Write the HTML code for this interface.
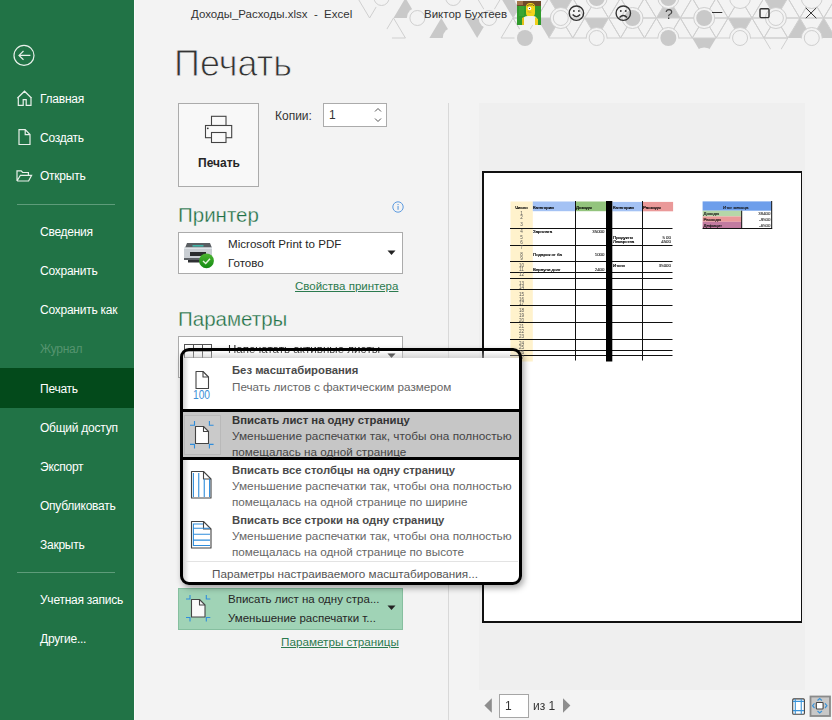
<!DOCTYPE html>
<html><head><meta charset="utf-8">
<style>
*{margin:0;padding:0;box-sizing:border-box}
html,body{width:832px;height:720px;overflow:hidden;background:#f3f3f3;font-family:"Liberation Sans",sans-serif}
.a{position:absolute;white-space:nowrap;line-height:1}
#side{position:absolute;left:0;top:0;width:134px;height:720px;background:#217346}
#side .t{position:absolute;left:40px;color:#fff;font-size:12px;letter-spacing:-0.25px;line-height:1;white-space:nowrap}
.sep{position:absolute;left:17px;width:98px;height:1px;background:#5e9c7a}
</style></head><body>
<div style="position:absolute;left:134px;top:0;width:1px;height:720px;background:#fafafa"></div>
<div id="side">
  <div id="sel" style="position:absolute;left:0;top:368px;width:134px;height:40px;background:#034a1b"></div>
  
<svg style="position:absolute;left:0;top:0" width="134" height="200">
  <g fill="none" stroke="#e8f0ea" stroke-width="1.2">
    <circle cx="24" cy="55.4" r="10"/>
    <path d="M19 55.4H30.4M23.5 51L19 55.4L23.5 59.8"/>
    <path d="M17.3 98.3L24.5 91.2L31.7 98.3M18.3 97.5V105.3H23.2V99.6H26.2V105.3H31V97.5"/>
    <path d="M19 129.7H25.2L30 134.6V144.5H19Z M25.2 129.7V134.6H30"/>
    <path d="M17 181V170.8H21.2L22.6 172.5H28.4V175.2 M17 181H28.6L31.6 175.3H20.4L17 181"/>
  </g>
</svg>
  <div class="sep" style="top:204px"></div>
  <div class="sep" style="top:572px"></div>
  <div class="t" style="top:92.8px">Главная</div>
  <div class="t" style="top:131.8px">Создать</div>
  <div class="t" style="top:170.4px">Открыть</div>
  <div class="t" style="top:225.5px">Сведения</div>
  <div class="t" style="top:264.8px">Сохранить</div>
  <div class="t" style="top:304px">Сохранить как</div>
  <div class="t" style="top:343.2px;color:#55946f">Журнал</div>
  <div class="t" style="top:382.6px">Печать</div>
  <div class="t" style="top:421.8px">Общий доступ</div>
  <div class="t" style="top:461px">Экспорт</div>
  <div class="t" style="top:500.2px">Опубликовать</div>
  <div class="t" style="top:539px">Закрыть</div>
  <div class="t" style="top:594px">Учетная запись</div>
  <div class="t" style="top:633px">Другие...</div>
</div>

<!-- pattern -->
<svg style="position:absolute;left:0;top:0" width="832" height="60">
<defs><mask id="pm" maskUnits="userSpaceOnUse" x="0" y="0" width="832" height="60"><rect width="832" height="60" fill="#fff"/>
<circle cx="381.55" cy="-2.00" r="10.5" fill="#000"/>
<circle cx="453.25" cy="-2.00" r="10.5" fill="#000"/>
<circle cx="524.95" cy="-2.00" r="10.5" fill="#000"/>
<circle cx="596.65" cy="-2.00" r="10.5" fill="#000"/>
<circle cx="668.35" cy="-2.00" r="10.5" fill="#000"/>
<circle cx="740.05" cy="-2.00" r="10.5" fill="#000"/>
<circle cx="811.75" cy="-2.00" r="10.5" fill="#000"/>
<circle cx="345.70" cy="18.00" r="10.5" fill="#000"/>
<circle cx="417.40" cy="18.00" r="10.5" fill="#000"/>
<circle cx="489.10" cy="18.00" r="10.5" fill="#000"/>
<circle cx="560.80" cy="18.00" r="10.5" fill="#000"/>
<circle cx="632.50" cy="18.00" r="10.5" fill="#000"/>
<circle cx="704.20" cy="18.00" r="10.5" fill="#000"/>
<circle cx="775.90" cy="18.00" r="10.5" fill="#000"/>
<circle cx="847.60" cy="18.00" r="10.5" fill="#000"/>
<circle cx="381.55" cy="38.00" r="10.5" fill="#000"/>
<circle cx="453.25" cy="38.00" r="10.5" fill="#000"/>
<circle cx="524.95" cy="38.00" r="10.5" fill="#000"/>
<circle cx="596.65" cy="38.00" r="10.5" fill="#000"/>
<circle cx="668.35" cy="38.00" r="10.5" fill="#000"/>
<circle cx="740.05" cy="38.00" r="10.5" fill="#000"/>
<circle cx="811.75" cy="38.00" r="10.5" fill="#000"/>
<circle cx="345.70" cy="58.00" r="10.5" fill="#000"/>
<circle cx="417.40" cy="58.00" r="10.5" fill="#000"/>
<circle cx="489.10" cy="58.00" r="10.5" fill="#000"/>
<circle cx="560.80" cy="58.00" r="10.5" fill="#000"/>
<circle cx="632.50" cy="58.00" r="10.5" fill="#000"/>
<circle cx="704.20" cy="58.00" r="10.5" fill="#000"/>
<circle cx="775.90" cy="58.00" r="10.5" fill="#000"/>
<circle cx="847.60" cy="58.00" r="10.5" fill="#000"/>
</mask><clipPath id="pc"><rect x="0" y="0" width="832" height="38.5"/></clipPath></defs>
<g mask="url(#pm)">
<polygon points="405.45,-2.00 393.50,18.00 417.40,18.00" fill="#c9c9c9"/>
<polygon points="441.30,18.00 429.35,38.00 453.25,38.00" fill="#c9c9c9"/>
<polygon points="465.20,18.00 489.10,18.00 477.15,38.00" fill="#c9c9c9"/>
<polygon points="501.05,-2.00 524.95,-2.00 513.00,18.00" fill="#c9c9c9"/>
<polygon points="536.90,18.00 560.80,18.00 548.85,38.00" fill="#c9c9c9"/>
<polygon points="548.85,-2.00 572.75,-2.00 560.80,18.00" fill="#c9c9c9"/>
<polygon points="584.70,18.00 608.60,18.00 596.65,38.00" fill="#c9c9c9"/>
<polygon points="668.35,-2.00 656.40,18.00 680.30,18.00" fill="#c9c9c9"/>
<polygon points="692.25,38.00 716.15,38.00 704.20,58.00" fill="#c9c9c9"/>
<polygon points="728.10,18.00 752.00,18.00 740.05,38.00" fill="#c9c9c9"/>
<polygon points="763.95,-2.00 787.85,-2.00 775.90,18.00" fill="#c9c9c9"/>
<polygon points="799.80,18.00 787.85,38.00 811.75,38.00" fill="#c9c9c9"/>
<polygon points="823.70,18.00 811.75,38.00 835.65,38.00" fill="#c9c9c9"/>
<g fill="none" stroke="#cfcfcf" stroke-width="1">
<polygon points="357.65,-2.00 381.55,-2.00 369.60,18.00"/>
<polygon points="393.50,18.00 381.55,38.00 405.45,38.00"/>
<polygon points="477.15,-2.00 501.05,-2.00 489.10,18.00"/>
<polygon points="513.00,18.00 501.05,38.00 524.95,38.00"/>
<polygon points="524.95,-2.00 548.85,-2.00 536.90,18.00"/>
<polygon points="524.95,-2.00 513.00,18.00 536.90,18.00"/>
<polygon points="513.00,18.00 536.90,18.00 524.95,38.00"/>
<polygon points="763.95,38.00 787.85,38.00 775.90,58.00"/>
<polygon points="548.85,-2.00 536.90,18.00 560.80,18.00"/>
<polygon points="572.75,-2.00 596.65,-2.00 584.70,18.00"/>
<polygon points="572.75,-2.00 560.80,18.00 584.70,18.00"/>
<polygon points="596.65,-2.00 620.55,-2.00 608.60,18.00"/>
<polygon points="596.65,-2.00 584.70,18.00 608.60,18.00"/>
<polygon points="620.55,-2.00 644.45,-2.00 632.50,18.00"/>
<polygon points="620.55,-2.00 608.60,18.00 632.50,18.00"/>
<polygon points="644.45,-2.00 668.35,-2.00 656.40,18.00"/>
<polygon points="644.45,-2.00 632.50,18.00 656.40,18.00"/>
<polygon points="668.35,-2.00 692.25,-2.00 680.30,18.00"/>
<polygon points="692.25,-2.00 716.15,-2.00 704.20,18.00"/>
<polygon points="692.25,-2.00 680.30,18.00 704.20,18.00"/>
<polygon points="716.15,-2.00 740.05,-2.00 728.10,18.00"/>
<polygon points="716.15,-2.00 704.20,18.00 728.10,18.00"/>
<polygon points="740.05,-2.00 763.95,-2.00 752.00,18.00"/>
<polygon points="740.05,-2.00 728.10,18.00 752.00,18.00"/>
<polygon points="763.95,-2.00 752.00,18.00 775.90,18.00"/>
<polygon points="787.85,-2.00 811.75,-2.00 799.80,18.00"/>
<polygon points="787.85,-2.00 775.90,18.00 799.80,18.00"/>
<polygon points="811.75,-2.00 835.65,-2.00 823.70,18.00"/>
<polygon points="811.75,-2.00 799.80,18.00 823.70,18.00"/>
<polygon points="835.65,-2.00 859.55,-2.00 847.60,18.00"/>
<polygon points="835.65,-2.00 823.70,18.00 847.60,18.00"/>
<polygon points="560.80,18.00 584.70,18.00 572.75,38.00"/>
<polygon points="560.80,18.00 548.85,38.00 572.75,38.00"/>
<polygon points="584.70,18.00 572.75,38.00 596.65,38.00"/>
<polygon points="608.60,18.00 632.50,18.00 620.55,38.00"/>
<polygon points="608.60,18.00 596.65,38.00 620.55,38.00"/>
<polygon points="632.50,18.00 656.40,18.00 644.45,38.00"/>
<polygon points="632.50,18.00 620.55,38.00 644.45,38.00"/>
<polygon points="656.40,18.00 680.30,18.00 668.35,38.00"/>
<polygon points="656.40,18.00 644.45,38.00 668.35,38.00"/>
<polygon points="680.30,18.00 704.20,18.00 692.25,38.00"/>
<polygon points="680.30,18.00 668.35,38.00 692.25,38.00"/>
<polygon points="704.20,18.00 728.10,18.00 716.15,38.00"/>
<polygon points="704.20,18.00 692.25,38.00 716.15,38.00"/>
<polygon points="728.10,18.00 716.15,38.00 740.05,38.00"/>
<polygon points="752.00,18.00 775.90,18.00 763.95,38.00"/>
<polygon points="752.00,18.00 740.05,38.00 763.95,38.00"/>
<polygon points="775.90,18.00 799.80,18.00 787.85,38.00"/>
<polygon points="775.90,18.00 763.95,38.00 787.85,38.00"/>
<polygon points="799.80,18.00 823.70,18.00 811.75,38.00"/>
<polygon points="823.70,18.00 847.60,18.00 835.65,38.00"/>
<polygon points="847.60,18.00 871.50,18.00 859.55,38.00"/>
<polygon points="847.60,18.00 835.65,38.00 859.55,38.00"/>
</g></g>
<g fill="none" stroke="#cfcfcf" stroke-width="1">
<circle cx="381.55" cy="-2.00" r="7.5"/>
<circle cx="453.25" cy="-2.00" r="7.5"/>
<circle cx="596.65" cy="-2.00" r="10.5" clip-path="url(#pc)"/>
<circle cx="596.65" cy="-2.00" r="8" fill="#c9c9c9" stroke="none"/>
<circle cx="668.35" cy="-2.00" r="10.5" clip-path="url(#pc)"/>
<circle cx="668.35" cy="-2.00" r="8" fill="#c9c9c9" stroke="none"/>
<circle cx="740.05" cy="-2.00" r="10.5" clip-path="url(#pc)"/>
<circle cx="811.75" cy="-2.00" r="10.5" clip-path="url(#pc)"/>
<circle cx="417.40" cy="18.00" r="7.5"/>
<circle cx="489.10" cy="18.00" r="7.5"/>
<circle cx="560.80" cy="18.00" r="10.5" clip-path="url(#pc)"/>
<circle cx="560.80" cy="18.00" r="7.5"/>
<circle cx="632.50" cy="18.00" r="10.5" clip-path="url(#pc)"/>
<circle cx="632.50" cy="18.00" r="8" fill="#c9c9c9" stroke="none"/>
<circle cx="704.20" cy="18.00" r="10.5" clip-path="url(#pc)"/>
<circle cx="704.20" cy="18.00" r="8" fill="#c9c9c9" stroke="none"/>
<circle cx="775.90" cy="18.00" r="10.5" clip-path="url(#pc)"/>
<circle cx="775.90" cy="18.00" r="7.5"/>
<circle cx="847.60" cy="18.00" r="10.5" clip-path="url(#pc)"/>
<circle cx="847.60" cy="18.00" r="7.5"/>
<circle cx="524.95" cy="38.00" r="8" fill="#c9c9c9" stroke="none"/>
<circle cx="596.65" cy="38.00" r="10.5" clip-path="url(#pc)"/>
<circle cx="596.65" cy="38.00" r="7.5"/>
<circle cx="668.35" cy="38.00" r="10.5" clip-path="url(#pc)"/>
<circle cx="668.35" cy="38.00" r="8" fill="#c9c9c9" stroke="none"/>
<circle cx="740.05" cy="38.00" r="10.5" clip-path="url(#pc)"/>
<circle cx="740.05" cy="38.00" r="7.5"/>
<circle cx="811.75" cy="38.00" r="10.5" clip-path="url(#pc)"/>
<circle cx="811.75" cy="38.00" r="7.5"/>
</g>
</svg>
<!-- /pattern -->
<!-- title -->
<div class="a" style="left:191px;top:9px;font-size:11.5px;color:#333">Доходы_Расходы.xlsx&nbsp; - &nbsp;Excel</div>
<div class="a" style="left:424px;top:8.5px;font-size:11.5px;color:#333">Виктор Бухтеев</div>

<!-- heading -->
<div class="a" style="left:174px;top:46px;font-size:36px;color:#333;-webkit-text-stroke:0.9px #f3f3f3">Печать</div>

<!-- print button -->
<div style="position:absolute;left:178px;top:103px;width:81px;height:84px;border:1px solid #ababab;background:#f8f8f8"></div>
<div class="a" style="left:198px;top:157px;font-size:12px;font-weight:bold;color:#262626">Печать</div>
<div class="a" style="left:275px;top:110px;font-size:12px;color:#333">Копии:</div>
<div style="position:absolute;left:323px;top:103px;width:64px;height:23.5px;border:1px solid #ababab;background:#fff"></div>
<div class="a" style="left:329px;top:109px;font-size:12px;color:#333">1</div>

<svg style="position:absolute;left:370px;top:104px" width="16" height="22"><path d="M5 7.5L8 4.5L11 7.5 M5 14.5L8 17.5L11 14.5" stroke="#555" stroke-width="1" fill="none"/></svg>
<!-- printer -->
<div class="a" style="left:178px;top:205px;font-size:20.5px;color:#1f7045;-webkit-text-stroke:0.3px #f3f3f3">Принтер</div>
<div style="position:absolute;left:178px;top:232px;width:225px;height:42px;border:1px solid #ababab;background:#fff"></div>
<div class="a" style="left:228px;top:237.5px;font-size:11.6px;color:#262626">Microsoft Print to PDF</div>
<div class="a" style="left:228px;top:257px;font-size:11.6px;color:#262626">Готово</div>
<div class="a" style="left:295px;top:280.5px;font-size:11.5px;color:#2b7a4f;text-decoration:underline">Свойства принтера</div>

<div class="a" style="left:178px;top:309px;font-size:20.5px;color:#1f7045;-webkit-text-stroke:0.3px #f3f3f3">Параметры</div>
<div style="position:absolute;left:178px;top:336px;width:225px;height:42px;border:1px solid #ababab;background:#fff"></div>

<!-- bottom dropdown -->
<div style="position:absolute;left:178px;top:588px;width:225px;height:42px;border:1px solid #86bf9f;background:#a0d3b6"></div>
<svg style="position:absolute;left:178px;top:588px" width="40" height="42">
  <g fill="#fafafa" stroke="#444" stroke-width="1.1" stroke-linejoin="round">
    <path d="M13.5 11.5H21.5L27 17V29H13.5Z"/><path d="M21.5 11.5V17H27" fill="none"/>
  </g>
  <g stroke="#2f8ddb" stroke-width="1.1" fill="none">
    <path d="M12 7V11H8 M28.3 7V11H32.3 M12 33.5V29.5H8 M28.3 33.5V29.5H32.3"/>
  </g>
</svg>
<div class="a" style="left:228px;top:594px;font-size:11.5px;color:#262626">Вписать лист на одну стра...</div>
<div class="a" style="left:228px;top:613px;font-size:11.5px;color:#262626">Уменьшение распечатки т...</div>
<div class="a" style="left:281px;top:636px;font-size:11.7px;color:#2b7a4f;text-decoration:underline">Параметры страницы</div>


<!-- title icons -->
<svg style="position:absolute;left:500px;top:0" width="332" height="30">
  <g fill="none" stroke="#333" stroke-width="1.4">
    <circle cx="76.4" cy="13.2" r="7.2"/>
    <circle cx="123.3" cy="13.2" r="7.2"/>
    <path d="M72.6 14.6Q76.4 18.6 80.2 14.6"/>
    <path d="M119.5 17.4Q123.3 13.6 127.1 17.4"/>
    <path d="M212 12.5H222.3" stroke-width="1"/>
    <rect x="260" y="8.8" width="9" height="8.8" rx="1"/>
    <path d="M305.8 7.9L316.3 18.2M316.3 7.9L305.8 18.2" stroke-width="1"/>
  </g>
  <g fill="#333">
    <circle cx="73.9" cy="11" r="0.9"/><circle cx="78.9" cy="11" r="0.9"/>
    <circle cx="120.8" cy="11" r="0.9"/><circle cx="125.8" cy="11" r="0.9"/>
  </g>
  <text x="165" y="18.5" font-family="Liberation Sans" font-size="14" fill="#444" style="will-change:transform">?</text>
</svg>
<!-- avatar -->
<svg style="position:absolute;left:517px;top:1px" width="24" height="24">
  <rect width="24" height="24" fill="#2f9a2b"/>
  <rect width="24" height="5" fill="#6e4a2a"/>
  <rect x="0" y="0" width="6" height="4" fill="#a4754a"/>
  <rect x="2" y="5" width="5" height="10" fill="#3aa532"/>
  <path d="M9 6Q9 2 13.5 2Q18 2 18 6V12Q18 16 13.5 16Q9 16 9 12Z" fill="#f2d31b"/>
  <path d="M10 5Q12 3 14 4Q16 3 17 5" stroke="#5a4a1a" stroke-width="0.8" fill="none"/>
  <circle cx="12.5" cy="7.5" r="1.8" fill="#fff"/><circle cx="12.5" cy="7.5" r="0.6" fill="#222"/>
  <path d="M10 10Q12 13 15 11" fill="#c9a83a"/>
  <path d="M6 24V19Q6 15 11 15H16Q20 15 20 19V24Z" fill="#f3f3ef"/>
  <path d="M18 16L21 18V24H18Z" fill="#f0cf1c"/>
  <path d="M5 17L7 16V24H5Z" fill="#e3c21a"/>
</svg>
<!-- print icon -->
<svg style="position:absolute;left:200px;top:110px" width="40" height="40">
  <g fill="#fafafa" stroke="#444" stroke-width="1.1">
    <rect x="11.5" y="6.3" width="14.5" height="9.2"/>
    <rect x="5.5" y="15.5" width="26.2" height="12.2"/>
    <rect x="11.5" y="22.5" width="14.5" height="10"/>
  </g>
  <circle cx="7.8" cy="18.3" r="0.9" fill="#333"/>
</svg>

<!-- printer device icon -->
<svg style="position:absolute;left:178px;top:236px" width="40" height="38">
  <defs><linearGradient id="gch" x1="0" y1="0" x2="0" y2="1"><stop offset="0" stop-color="#4cb531"/><stop offset="1" stop-color="#138a12"/></linearGradient></defs>
  <path d="M7 12L9 7H32L34 12Z" fill="#5a5e62"/>
  <rect x="6" y="11.5" width="28" height="11.5" fill="#c9ced3"/>
  <rect x="6" y="11.5" width="28" height="1.3" fill="#e4e8ec"/>
  <rect x="14.5" y="9.2" width="11" height="1.3" fill="#3ccab8"/>
  <rect x="12" y="16" width="16" height="4" fill="#2a2c2e"/>
  <rect x="6" y="22" width="28" height="2" fill="#5d6166"/>
  <rect x="10" y="24" width="20" height="2.5" fill="#2e3033"/>
  <circle cx="28.5" cy="24.8" r="7.4" fill="url(#gch)"/>
  <path d="M25 25L27.7 27.5L32 22.8" fill="none" stroke="#e6f5e0" stroke-width="1.4"/>
</svg>
<!-- info icon -->
<svg style="position:absolute;left:391px;top:200px" width="14" height="14">
  <circle cx="7" cy="7" r="5.2" fill="none" stroke="#5d9be0" stroke-width="1"/>
  <rect x="6.5" y="6" width="1.1" height="3.8" fill="#5d9be0"/><rect x="6.5" y="4" width="1.1" height="1.1" fill="#5d9be0"/>
</svg>
<!-- dropdown arrows -->
<svg style="position:absolute;left:386px;top:249px" width="12" height="8"><path d="M1.5 1.5H9.5L5.5 6Z" fill="#222"/></svg>
<svg style="position:absolute;left:386px;top:604px" width="12" height="8"><path d="M1.5 1.5H9.5L5.5 6Z" fill="#222"/></svg>

<!-- divider & preview -->
<div style="position:absolute;left:448px;top:103px;width:1px;height:617px;background:#d8d8d8"></div>
<div style="position:absolute;left:479px;top:103px;width:326px;height:587px;background:#efefef"></div>
<div style="position:absolute;left:482px;top:171px;width:320px;height:452px;border:2px solid #111;border-right-width:1.5px;background:#fff"></div>
<svg style="position:absolute;left:0;top:0" width="832" height="720">
  <rect x="510.5" y="201.5" width="22.3" height="160" fill="#fff2cc"/>
  <rect x="532.8" y="201.5" width="42.6" height="9.7" fill="#a4c2f4"/>
  <rect x="575.4" y="201.5" width="30.6" height="9.7" fill="#93c47d"/>
  <rect x="612.3" y="201.9" width="30" height="9.4" fill="#a4c2f4"/>
  <rect x="642.3" y="201.9" width="30.8" height="9.4" fill="#ea9999"/>
  <g stroke="#111" stroke-width="1" fill="none"><path d="M510 228.5H672.5" /><path d="M510 245.5H672.5" /><path d="M510 261.5H672.5" /><path d="M510 272.5H672.5" /><path d="M510 278.5H672.5" /><path d="M510 289.5H672.5" /><path d="M510 305.5H672.5" /><path d="M510 322.5H672.5" /><path d="M510 339.5H672.5" /><path d="M510 350.5H672.5" /><path d="M510 355.5H672.5" />
    <path d="M575.5 201V360.5 M642.5 201V360.5"/>
  </g>
  <rect x="606" y="201" width="6.3" height="160.5" fill="#000"/>
  <g font-family="Liberation Sans" font-size="4.6" fill="#555" text-anchor="middle">
    <text x="521.5" y="208.5" font-size="4.4" fill="#000" stroke="#000" stroke-width="0.2">Число</text>
    <text x="521.5" y="215.0">1</text><text x="521.5" y="219.0">2</text><text x="521.5" y="225.5">3</text><text x="521.5" y="233.0">4</text><text x="521.5" y="238.5">5</text><text x="521.5" y="243.5">6</text><text x="521.5" y="248.5">7</text><text x="521.5" y="255.5">8</text><text x="521.5" y="260.0">9</text><text x="521.5" y="266.5">10</text><text x="521.5" y="271.0">11</text><text x="521.5" y="276.0">12</text><text x="521.5" y="284.5">13</text><text x="521.5" y="288.5">14</text><text x="521.5" y="295.5">15</text><text x="521.5" y="300.5">16</text><text x="521.5" y="304.5">17</text><text x="521.5" y="311.5">18</text><text x="521.5" y="316.5">19</text><text x="521.5" y="321.5">20</text><text x="521.5" y="327.5">21</text><text x="521.5" y="332.5">22</text><text x="521.5" y="337.5">23</text><text x="521.5" y="344.5">24</text><text x="521.5" y="348.5">25</text><text x="521.5" y="353.5">26</text><text x="521.5" y="358.5">27</text>
  </g>
  <g font-family="Liberation Sans" font-size="4.4" fill="#000" stroke="#000" stroke-width="0.2">
    <text x="533" y="208.5">Категории</text>
    <text x="576" y="208.5">Доходы</text>
    <text x="613" y="208.5">Категории</text>
    <text x="643" y="208.5">Расходы</text>
    <text x="533" y="232.5">Зарплата</text>
    <text x="533" y="256">Подарок от ба</text>
    <text x="533" y="271">Вернули долг</text>
    <text x="613" y="238.5">Продукты</text>
    <text x="613" y="243">Лекарства</text>
    <text x="613" y="266.5">Итоги</text>
  </g>
  <g font-family="Liberation Sans" font-size="4.4" fill="#222" text-anchor="end" stroke="#222" stroke-width="0.1">
    <text x="604.5" y="232.5">35000</text>
    <text x="604.5" y="256">1000</text>
    <text x="604.5" y="271">2400</text>
    <text x="671" y="238.5">5 00</text>
    <text x="671" y="243">4500</text>
    <text x="671" y="266.5">35000</text>
  </g>
  <!-- summary -->
  <rect x="702.6" y="201.4" width="69.1" height="9.3" fill="#6d9eeb"/>
  <rect x="702.6" y="210.7" width="39.1" height="5.7" fill="#b6d7a8"/>
  <rect x="702.6" y="216.4" width="39.1" height="5.4" fill="#ea9999"/>
  <rect x="702.6" y="221.8" width="39.1" height="6.7" fill="#c27ba0"/>
  <path d="M741.7 210.7V228.5 M702.6 228.5H772.2 M771.7 201V228.5" stroke="#111" stroke-width="1" fill="none"/>
  <g font-family="Liberation Sans" font-size="4.4" fill="#111" stroke="#111" stroke-width="0.15">
    <text x="723" y="209">Итог месяца</text>
    <text x="703.5" y="215">Доходы</text>
    <text x="703.5" y="220.5">Расходы</text>
    <text x="703.5" y="226.5">Дефицит</text>
  </g>
  <g font-family="Liberation Sans" font-size="4.4" fill="#333" text-anchor="end" stroke="#333" stroke-width="0.1">
    <text x="770.5" y="215">38400</text>
    <text x="770.5" y="220.5">-9500</text>
    <text x="770.5" y="226.5">-6500</text>
  </g>
</svg>


<!-- nav -->
<svg style="position:absolute;left:480px;top:690px" width="100" height="30">
  <path d="M491.8 8.3V22.8L484.4 15.5Z" transform="translate(-480,0)" fill="#8e8e8e"/>
  <path d="M563 8.3V22.8L570.4 15.5Z" transform="translate(-480,0)" fill="#8e8e8e"/>
</svg>
<div style="position:absolute;left:499px;top:694px;width:30px;height:24px;border:1.5px solid #a6a6a6;background:#fff"></div>
<div class="a" style="left:505px;top:700px;font-size:12px;color:#333">1</div>
<div class="a" style="left:533px;top:700px;font-size:12px;color:#333">из 1</div>
<svg style="position:absolute;left:780px;top:685px" width="52" height="35">
  <rect x="12.7" y="13.9" width="11.7" height="15.3" rx="1" fill="#fff" stroke="#444" stroke-width="1.1"/>
  <path d="M15.3 14V29 M21.25 14V29 M13 16.4H24 M13 25.6H24" stroke="#3a93d8" stroke-width="1.1"/>
  <rect x="30.5" y="11.5" width="19.5" height="19.5" fill="#c8c8c8" stroke="#8a8a8a" stroke-width="1.8"/>
  <rect x="36.3" y="17.5" width="6.8" height="6.5" rx="0.8" fill="#fff" stroke="#444" stroke-width="1.1"/>
  <path d="M37.5 15.5L39.7 13.6L41.9 15.5 M37.5 26L39.7 27.9L41.9 26 M34.5 18.4L32.6 20.7L34.5 23 M45 18.4L46.9 20.7L45 23" stroke="#3a93d8" stroke-width="1.2" fill="none"/>
</svg>

<!-- popup -->
<!-- underlying dropdown content -->
<svg style="position:absolute;left:182px;top:342px" width="30" height="20">
  <g fill="#fff" stroke="#555" stroke-width="1"><rect x="2.5" y="2.5" width="27" height="13.5"/></g>
  <path d="M11.5 2.5V16M20.5 2.5V16M2.5 9H29.5" stroke="#555" stroke-width="1"/>
</svg>
<div class="a" style="left:228px;top:343px;font-size:11.6px;color:#262626">Напечатать активные листы</div>
<svg style="position:absolute;left:386px;top:352px" width="12" height="8"><path d="M1.5 1.5H9.5L5.5 6Z" fill="#222"/></svg>
<!-- shadow -->
<div style="position:absolute;left:180px;top:348px;width:342px;height:237px;border-radius:9px;box-shadow:2px 3px 6px rgba(0,0,0,0.35)"></div>
<!-- menu -->
<div style="position:absolute;left:183px;top:351px;width:336px;height:7px;background:linear-gradient(rgba(255,255,255,0.1),rgba(190,190,190,0.55))"></div>
<div style="position:absolute;left:183px;top:358px;width:336px;height:224px;background:#fff"></div>
<div style="position:absolute;left:183px;top:358px;width:6px;height:224px;background:linear-gradient(90deg,#d4d4d4,#fff)"></div>
<div style="position:absolute;left:180px;top:348px;width:342px;height:237px;border:3.5px solid #000;border-radius:9px"></div>
<div style="position:absolute;left:183px;top:409px;width:336px;height:51px;border-top:3px solid #000;border-bottom:3px solid #000;background:#c6c6c6"></div>
<div style="position:absolute;left:184px;top:415px;width:37px;height:40px;border:1px solid #b9b9b9;background:#cacaca"></div>
<div style="position:absolute;left:186px;top:561px;width:332px;height:1px;background:#e3e3e3"></div>
<div class="a" style="left:232px;top:365px;font-size:11.3px;font-weight:bold;color:#4a4a4a">Без масштабирования</div>
<div class="a" style="left:232px;top:381px;font-size:11.7px;color:#666">Печать листов с фактическим размером</div>
<div class="a" style="left:232px;top:415px;font-size:11.3px;font-weight:bold;color:#333">Вписать лист на одну страницу</div>
<div class="a" style="left:232px;top:431px;font-size:11.8px;color:#444">Уменьшение распечатки так, чтобы она полностью</div>
<div class="a" style="left:232px;top:446px;font-size:11.7px;color:#444">помещалась на одной странице</div>
<div class="a" style="left:232px;top:465px;font-size:11.3px;font-weight:bold;color:#4a4a4a">Вписать все столбцы на одну страницу</div>
<div class="a" style="left:232px;top:481px;font-size:11.8px;color:#666">Уменьшение распечатки так, чтобы она полностью</div>
<div class="a" style="left:232px;top:496px;font-size:11.7px;color:#666">помещалась на одной странице по ширине</div>
<div class="a" style="left:232px;top:515px;font-size:11.3px;font-weight:bold;color:#4a4a4a">Вписать все строки на одну страницу</div>
<div class="a" style="left:232px;top:531px;font-size:11.8px;color:#666">Уменьшение распечатки так, чтобы она полностью</div>
<div class="a" style="left:232px;top:546px;font-size:11.7px;color:#666">помещалась на одной странице по высоте</div>
<div class="a" style="left:212px;top:568px;font-size:11.7px;color:#555">Параметры настраиваемого масштабирования...</div>
<svg style="position:absolute;left:180px;top:360px" width="40" height="200">
  <g fill="#fff" stroke="#444" stroke-width="1.1" stroke-linejoin="round">
    <path d="M16 11.5H23L28.5 17V28.5H16Z"/><path d="M23 11.5V17H28.5" fill="none"/>
    <path d="M15.5 66.5H23.5L28.5 71.5V83.5H15.5Z"/><path d="M23.5 66.5V71.5H28.5" fill="none"/>
    <path d="M11.5 111.5H23.5L31 119V138H11.5Z"/><path d="M23.5 111.5V119H31" fill="none"/>
    <path d="M11.5 161.5H23.5L31 169V188H11.5Z"/><path d="M23.5 161.5V169H31" fill="none"/>
  </g>
  <text x="13" y="39" font-family="Liberation Sans" font-size="12.5" fill="#3c8fd6" textLength="17" lengthAdjust="spacingAndGlyphs">100</text>
  <g stroke="#2f8ddb" stroke-width="1.1" fill="none">
    <path d="M14.5 61V65.3H10 M29.4 61V65.3H33.6 M14.5 88.5V84.4H10 M29.4 88.5V84.4H33.6"/>
    <path d="M13.4 113V137 M18.75 113V137 M24.25 119V137 M29.6 119V137"/>
    <path d="M13.4 163.5V186 M13 164H23 M13 168.25H30 M13 174.25H30 M13 180.1H30 M13 185.5H30"/>
  </g>
</svg>
</body></html>
